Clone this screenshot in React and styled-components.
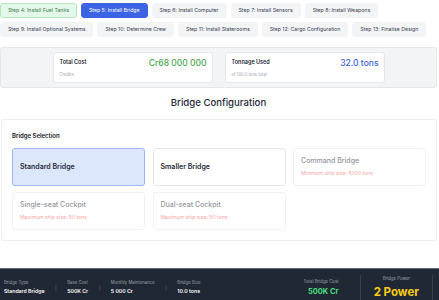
import React from 'react';
import styled, { createGlobalStyle, css } from 'styled-components';

const Global = createGlobalStyle`
  html, body { margin: 0; padding: 0; background: #ffffff; }
  body { font-family: Inter, "Noto Sans", sans-serif; color: #1f2937; -webkit-font-smoothing: antialiased; }
  #root { height: 100vh; }
  * { box-sizing: border-box; }
`;

const Page = styled.div`
  height: 100vh;
  display: flex;
  flex-direction: column;
  overflow: hidden;
`;

const Main = styled.main`
  padding: 3px 2px 0 0;
`;

const Steps = styled.nav`
  display: flex;
  flex-wrap: wrap;
  gap: 4px;
`;

const StepButton = styled.button`
  font-family: inherit;
  font-size: 5.2px;
  line-height: 7px;
  padding: 3px 7px;
  border-radius: 3px;
  border: 1px solid #f3f4f6;
  background: #f3f4f6;
  color: #374151;
  white-space: nowrap;
  ${(p) => p.$state === 'done' && css`
    background: #e3f8e8;
    border-color: #b4e6c0;
    color: #3f7d4e;
  `}
  ${(p) => p.$state === 'active' && css`
    background: #3b63e3;
    border-color: #3b63e3;
    color: #ffffff;
  `}
`;

const StatsPanel = styled.section`
  margin-top: 10px;
  background: #f3f4f6;
  border: 1px solid #e5e7eb;
  border-radius: 3px;
  padding: 4px;
  display: flex;
  justify-content: center;
  gap: 12px;
`;

const StatCard = styled.div`
  width: 160px;
  background: #ffffff;
  border: 1px solid #e5e7eb;
  border-radius: 3px;
  padding: 5px 5px 5px 6px;
  display: flex;
  justify-content: space-between;
  align-items: flex-start;
`;

const StatLabel = styled.div`
  font-size: 5.5px;
  line-height: 8px;
  font-weight: 600;
  color: #1f2937;
`;

const StatSub = styled.div`
  font-size: 4.2px;
  line-height: 5px;
  margin-top: 5.5px;
  color: #9ca3af;
`;

const StatValue = styled.div`
  font-size: 8.5px;
  line-height: 10px;
  font-weight: 500;
  color: ${(p) => p.$color};
`;

const Heading = styled.h2`
  margin: 9px 0 10px;
  text-align: center;
  font-size: 9.6px;
  line-height: 12px;
  font-weight: 500;
  color: #1f2937;
`;

const Section = styled.section`
  margin-left: 1px;
  border: 1px solid #eceef1;
  border-radius: 3px;
  padding: 12px 10px 10px;
`;

const SectionTitle = styled.h3`
  margin: 0 0 8px;
  font-size: 6px;
  line-height: 8px;
  font-weight: 600;
  color: #111827;
`;

const OptionGrid = styled.div`
  display: grid;
  grid-template-columns: repeat(3, 1fr);
  gap: 6px 7.5px;
`;

const OptionCard = styled.div`
  height: 38px;
  border: 1px solid #e5e7eb;
  border-radius: 3px;
  padding: 0 7px;
  display: flex;
  flex-direction: column;
  justify-content: center;
  background: #ffffff;
  ${(p) => p.$selected && css`
    background: #dce7fc;
    border-color: #9ab8f5;
  `}
  ${(p) => p.$disabled && css`
    opacity: 0.5;
  `}
`;

const OptionTitle = styled.div`
  font-size: 7px;
  line-height: 9px;
  font-weight: ${(p) => (p.$disabled ? 500 : 600)};
  color: #1f2937;
`;

const OptionNote = styled.div`
  margin-top: 5px;
  font-size: 5.1px;
  line-height: 7px;
  color: #ef4444;
`;

const Footer = styled.footer`
  margin-top: auto;
  height: 32px;
  background: #212835;
  border-top: 1px solid #5e6573;
  display: flex;
  align-items: center;
  justify-content: space-between;
  padding: 6px 6px 0 4px;
`;

const FooterLeft = styled.div`
  display: flex;
  align-items: center;
  gap: 10.5px;
`;

const FooterItem = styled.div`
  display: flex;
  flex-direction: column;
  gap: 2.5px;
  align-items: ${(p) => (p.$align === 'right' ? 'flex-end' : p.$align === 'center' ? 'center' : 'flex-start')};
`;

const FooterLabel = styled.div`
  font-size: 4.3px;
  line-height: 6px;
  color: #9ca3af;
`;

const FooterValue = styled.div`
  font-size: 5.2px;
  line-height: 7px;
  font-weight: 600;
  color: #ffffff;
`;

const Sep = styled.span`
  font-size: 5px;
  color: #6b7280;
`;

const FooterRight = styled.div`
  display: flex;
  align-items: stretch;
  align-self: stretch;
`;

const CostBlock = styled.div`
  align-self: center;
  padding-right: 21px;
`;

const CostValue = styled.div`
  font-size: 7.5px;
  line-height: 9px;
  font-weight: 700;
  color: #4ade80;
`;

const PowerBlock = styled.div`
  border-left: 1px solid #394150;
  border-right: 1px solid #394150;
  padding: 1px 13px 0;
  display: flex;
  flex-direction: column;
  align-items: center;
  gap: 3.5px;
`;

const PowerValue = styled.div`
  font-size: 11.5px;
  line-height: 13px;
  font-weight: 700;
  color: #facc15;
`;

const steps = [
  { label: 'Step 4: Install Fuel Tanks', state: 'done' },
  { label: 'Step 5: Install Bridge', state: 'active' },
  { label: 'Step 6: Install Computer' },
  { label: 'Step 7: Install Sensors' },
  { label: 'Step 8: Install Weapons' },
  { label: 'Step 9: Install Optional Systems' },
  { label: 'Step 10: Determine Crew' },
  { label: 'Step 11: Install Staterooms' },
  { label: 'Step 12: Cargo Configuration' },
  { label: 'Step 13: Finalise Design' },
];

const options = [
  { title: 'Standard Bridge', selected: true },
  { title: 'Smaller Bridge' },
  { title: 'Command Bridge', disabled: true, note: 'Minimum ship size: 5000 tons' },
  { title: 'Single-seat Cockpit', disabled: true, note: 'Maximum ship size: 50 tons' },
  { title: 'Dual-seat Cockpit', disabled: true, note: 'Maximum ship size: 50 tons' },
];

const footerItems = [
  { label: 'Bridge Type', value: 'Standard Bridge' },
  { label: 'Base Cost', value: '500K Cr' },
  { label: 'Monthly Maintenance', value: '5 000 Cr' },
  { label: 'Bridge Size', value: '10.0 tons' },
];

export default function App() {
  return (
    <Page>
      <Global />
      <Main>
        <Steps>
          {steps.map((s) => (
            <StepButton key={s.label} $state={s.state}>{s.label}</StepButton>
          ))}
        </Steps>

        <StatsPanel>
          <StatCard>
            <div>
              <StatLabel>Total Cost</StatLabel>
              <StatSub>Credits</StatSub>
            </div>
            <StatValue $color="#46a84f">Cr68 000 000</StatValue>
          </StatCard>
          <StatCard>
            <div>
              <StatLabel>Tonnage Used</StatLabel>
              <StatSub>of 100.0 tons total</StatSub>
            </div>
            <StatValue $color="#3b62e0">32.0 tons</StatValue>
          </StatCard>
        </StatsPanel>

        <Heading>Bridge Configuration</Heading>

        <Section>
          <SectionTitle>Bridge Selection</SectionTitle>
          <OptionGrid>
            {options.map((o) => (
              <OptionCard key={o.title} $selected={o.selected} $disabled={o.disabled}>
                <OptionTitle $disabled={o.disabled}>{o.title}</OptionTitle>
                {o.note && <OptionNote>{o.note}</OptionNote>}
              </OptionCard>
            ))}
          </OptionGrid>
        </Section>
      </Main>

      <Footer>
        <FooterLeft>
          {footerItems.map((f, i) => (
            <React.Fragment key={f.label}>
              {i > 0 && <Sep>|</Sep>}
              <FooterItem>
                <FooterLabel>{f.label}</FooterLabel>
                <FooterValue>{f.value}</FooterValue>
              </FooterItem>
            </React.Fragment>
          ))}
        </FooterLeft>
        <FooterRight>
          <CostBlock>
            <FooterItem $align="right">
              <FooterLabel>Total Bridge Cost</FooterLabel>
              <CostValue>500K Cr</CostValue>
            </FooterItem>
          </CostBlock>
          <PowerBlock>
            <FooterLabel>Bridge Power</FooterLabel>
            <PowerValue>2 Power</PowerValue>
          </PowerBlock>
        </FooterRight>
      </Footer>
    </Page>
  );
}
